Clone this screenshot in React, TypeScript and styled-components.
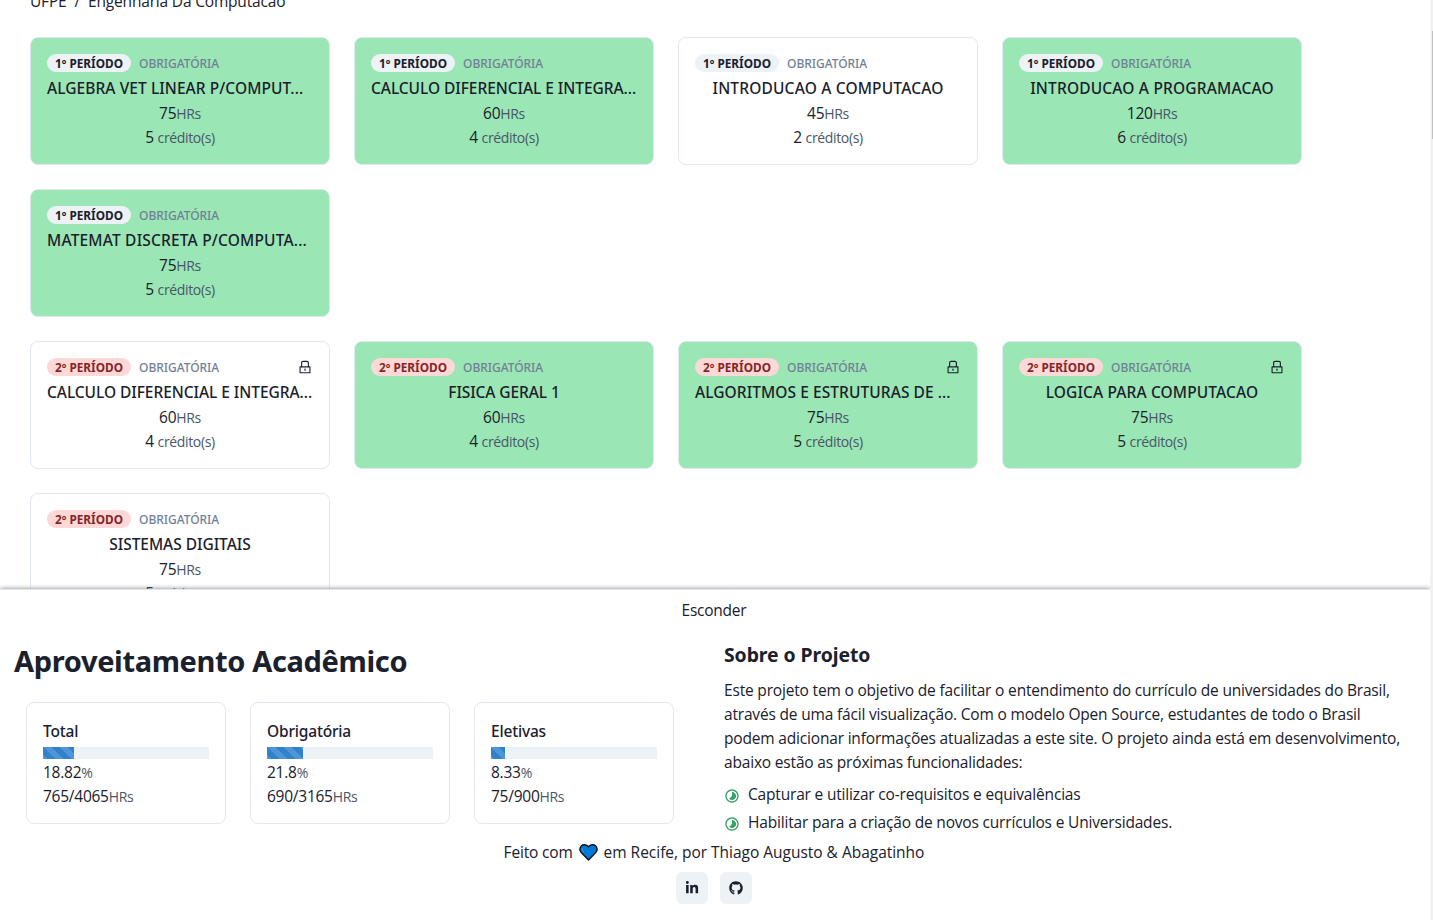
import React from "react";
import styled, { createGlobalStyle, css } from "styled-components";
import { AiOutlineLock } from "react-icons/ai";
import { MdTimelapse } from "react-icons/md";
import { FaGithub, FaLinkedinIn } from "react-icons/fa";

const body = `"Open Sans", "Noto Sans", sans-serif`;
const heading = `"Noto Sans", "Open Sans", sans-serif`;

const GlobalStyle = createGlobalStyle`
  *, *::before, *::after { box-sizing: border-box; }
  html, body { margin: 0; height: 100%; overflow: hidden; }
  body {
    background: #fff;
    color: #1a202c;
    font: 400 15.5px/24px ${body};
    letter-spacing: -0.18px;
  }
  h1, h2, h3, p, ul { margin: 0; padding: 0; }
`;

const Shell = styled.div`
  display: flex;
  width: 100%;
  height: 920px;
  overflow: hidden;
`;

const Main = styled.main`
  display: flex;
  flex-direction: column;
  flex: 1;
  min-width: 0;
  overflow: hidden;
`;

const ScrollTrack = styled.div`
  flex: none;
  display: flex;
  justify-content: flex-end;
  width: 3px;
  padding-top: 31px;
  background: #f1f1f1;
`;

const ScrollThumb = styled.div`
  width: 1px;
  height: 108px;
  background: #c1c1c1;
`;

const Curriculum = styled.section`
  flex: none;
  height: 589px;
  padding: 0 0 0 30px;
  overflow: hidden;
`;

const Breadcrumb = styled.nav`
  display: flex;
  gap: 8px;
  height: 24px;
  margin-top: -11px;
`;

const PeriodGrid = styled.div`
  display: grid;
  grid-template-columns: repeat(4, 300px);
  gap: 24px;
  margin-top: 24px;
`;

const CourseCard = styled.article<{ $done: boolean }>`
  height: 128px;
  padding: 16px;
  border: 1px solid #e2e8f0;
  border-radius: 8px;
  background: ${(p) => (p.$done ? "#9ae6b4" : "#fff")};
  text-align: center;
`;

const CardHead = styled.div`
  display: flex;
  align-items: center;
  gap: 8px;
  height: 18px;
  margin-bottom: 4px;
`;

const Badge = styled.span<{ $second: boolean }>`
  width: 84px;
  border-radius: 9px;
  font: 700 11.8px/18px ${heading};
  letter-spacing: 0;
  white-space: nowrap;
  ${(p) =>
    p.$second
      ? css`
          background: #fed7d7;
          color: #822727;
        `
      : css`
          background: #edf2f7;
          color: #1a202c;
        `}
`;

const Kind = styled.span`
  padding-top: 2px;
  color: #718096;
  font: 500 12px/18px ${heading};
  letter-spacing: -0.03px;
`;

const LockMark = styled(AiOutlineLock)`
  width: 16px;
  height: 16px;
  margin-left: auto;
`;

const CourseName = styled.h3<{ $clipped: boolean; $tracking: number }>`
  font: 500 15.5px/24px ${heading};
  letter-spacing: ${(p) => p.$tracking}px;
  text-align: ${(p) => (p.$clipped ? "left" : "center")};
  white-space: nowrap;
`;

const Figures = styled.p`
  height: 24px;
  padding-top: 1px;
  letter-spacing: -0.25px;
`;

const Unit = styled.span`
  color: #4a5568;
  font-size: 14px;
  line-height: 1;
  letter-spacing: -0.35px;
`;

const Panel = styled.footer`
  position: relative;
  flex: 1;
  display: flex;
  flex-direction: column;
  align-items: center;
  padding: 8px 2px 0 0;
  border-top: 1px solid #e2e8f0;
  background: #fff;
  box-shadow: 0 0 5px gray;
`;

const HideButton = styled.button`
  height: 24px;
  padding: 0;
  border: 0;
  background: none;
  color: inherit;
  font: inherit;
  letter-spacing: -0.25px;
`;

const Columns = styled.div`
  display: flex;
  align-self: stretch;
  height: 218px;
`;

const Progress = styled.section`
  width: 724px;
  padding: 19px 0 0 14px;
`;

const PanelTitle = styled.h1`
  font: 700 29px/40px ${heading};
  letter-spacing: -0.35px;
`;

const Stats = styled.div`
  display: flex;
  gap: 24px;
  margin: 21px 0 0 12px;
`;

const StatCard = styled.article`
  width: 200px;
  height: 122px;
  padding: 16px 16px 0;
  border: 1px solid #e2e8f0;
  border-radius: 8px;
`;

const StatName = styled.h3`
  height: 28px;
  font: 500 15.5px/24px ${heading};
  letter-spacing: -0.18px;
`;

const Track = styled.div`
  height: 12px;
  background: #edf2f7;
`;

const Fill = styled.div`
  height: 12px;
  background: linear-gradient(
      45deg,
      rgba(255, 255, 255, 0.15) 25%,
      transparent 25%,
      transparent 50%,
      rgba(255, 255, 255, 0.15) 50%,
      rgba(255, 255, 255, 0.15) 75%,
      transparent 75%,
      transparent
    )
    0 0 / 16px 16px #3182ce;
`;

const About = styled.section`
  width: 690px;
  padding-top: 21px;
`;

const AboutTitle = styled.h2`
  height: 35px;
  font: 700 19.4px/24px ${heading};
  letter-spacing: -0.07px;
`;

const RoadmapList = styled.ul`
  display: flex;
  flex-direction: column;
  gap: 4px;
  padding-top: 8px;
  list-style: none;
`;

const RoadmapItem = styled.li`
  display: flex;
  align-items: center;
  gap: 8px;
  height: 24px;
`;

const RoadmapIcon = styled(MdTimelapse)`
  width: 16px;
  height: 16px;
  margin-top: 4px;
  color: #38a169;
`;

const Credits = styled.p`
  display: flex;
  align-items: center;
  gap: 6px;
`;

const CreditNames = styled.span`
  letter-spacing: -0.02px;
`;

const Links = styled.div`
  display: flex;
  gap: 12px;
  margin-top: 8px;
`;

const LinkButton = styled.a`
  display: flex;
  align-items: center;
  justify-content: center;
  width: 32px;
  height: 32px;
  border-radius: 6px;
  background: #edf2f7;
  font-size: 14px;
`;

type Course = {
  name: string;
  hours: number;
  credits: number;
  done?: boolean;
  locked?: boolean;
  tracking?: number;
};

const periods: Course[][] = [
  [
    { name: "ALGEBRA VET LINEAR P/COMPUT...", hours: 75, credits: 5, done: true, tracking: 0.07 },
    { name: "CALCULO DIFERENCIAL E INTEGRA...", hours: 60, credits: 4, done: true, tracking: -0.05 },
    { name: "INTRODUCAO A COMPUTACAO", hours: 45, credits: 2 },
    { name: "INTRODUCAO A PROGRAMACAO", hours: 120, credits: 6, done: true },
    { name: "MATEMAT DISCRETA P/COMPUTA...", hours: 75, credits: 5, done: true, tracking: 0.18 },
  ],
  [
    { name: "CALCULO DIFERENCIAL E INTEGRA...", hours: 60, credits: 4, locked: true, tracking: -0.05 },
    { name: "FISICA GERAL 1", hours: 60, credits: 4, done: true, tracking: -0.1 },
    { name: "ALGORITMOS E ESTRUTURAS DE ...", hours: 75, credits: 5, done: true, locked: true, tracking: 0.07 },
    { name: "LOGICA PARA COMPUTACAO", hours: 75, credits: 5, done: true, locked: true, tracking: 0.12 },
    { name: "SISTEMAS DIGITAIS", hours: 75, credits: 5, tracking: -0.04 },
  ],
];

const stats = [
  { name: "Total", percent: 18.82, got: 765, total: 4065 },
  { name: "Obrigatória", percent: 21.8, got: 690, total: 3165 },
  { name: "Eletivas", percent: 8.33, got: 75, total: 900 },
];

const BlueHeart = () => (
  <svg width="19" height="18" viewBox="0 -0.5 19 18" aria-label="coração azul">
    <path
      d="M9.5 16.4 2.2 9.1C.4 7.2.5 4.1 2.3 2.4 4.3.6 7.4.8 9.5 3.3c2.1-2.5 5.2-2.7 7.2-.9 1.8 1.7 1.9 4.8.1 6.7Z"
      fill="#0078d7"
      stroke="#0b1016"
      strokeWidth="1.4"
      strokeLinejoin="round"
    />
    <path d="M3.2 5.2c.1 1.3.5 2.2 1.3 3" fill="none" stroke="#4aa3e8" strokeWidth="1" strokeLinecap="round" />
  </svg>
);

export default function App() {
  return (
    <Shell>
      <GlobalStyle />
      <Main>
        <Curriculum>
          <Breadcrumb>
            <span>UFPE</span>
            <span>/</span>
            <span>Engenharia Da Computacao</span>
          </Breadcrumb>
          {periods.map((courses, index) => (
            <PeriodGrid key={index}>
              {courses.map((course) => (
                <CourseCard key={course.name} $done={!!course.done}>
                  <CardHead>
                    <Badge $second={index === 1}>{index + 1}º PERÍODO</Badge>
                    <Kind>OBRIGATÓRIA</Kind>
                    {course.locked && <LockMark />}
                  </CardHead>
                  <CourseName $clipped={course.name.endsWith("...")} $tracking={course.tracking ?? 0.17}>
                    {course.name}
                  </CourseName>
                  <Figures>
                    {course.hours}
                    <Unit>HRs</Unit>
                  </Figures>
                  <Figures>
                    {course.credits} <Unit>crédito(s)</Unit>
                  </Figures>
                </CourseCard>
              ))}
            </PeriodGrid>
          ))}
        </Curriculum>
        <Panel>
          <HideButton>Esconder</HideButton>
          <Columns>
            <Progress>
              <PanelTitle>Aproveitamento Acadêmico</PanelTitle>
              <Stats>
                {stats.map((stat) => (
                  <StatCard key={stat.name}>
                    <StatName>{stat.name}</StatName>
                    <Track>
                      <Fill style={{ width: `${stat.percent}%` }} />
                    </Track>
                    <Figures>
                      {stat.percent}
                      <Unit>%</Unit>
                    </Figures>
                    <Figures>
                      {stat.got}/{stat.total}
                      <Unit>HRs</Unit>
                    </Figures>
                  </StatCard>
                ))}
              </Stats>
            </Progress>
            <About>
              <AboutTitle>Sobre o Projeto</AboutTitle>
              <p>
                Este projeto tem o objetivo de facilitar o entendimento do currículo de universidades do Brasil,
                através de uma fácil visualização. Com o modelo Open Source, estudantes de todo o Brasil podem
                adicionar informações atualizadas a este site. O projeto ainda está em desenvolvimento, abaixo estão
                as próximas funcionalidades:
              </p>
              <RoadmapList>
                <RoadmapItem>
                  <RoadmapIcon />
                  Capturar e utilizar co-requisitos e equivalências
                </RoadmapItem>
                <RoadmapItem>
                  <RoadmapIcon />
                  Habilitar para a criação de novos currículos e Universidades.
                </RoadmapItem>
              </RoadmapList>
            </About>
          </Columns>
          <Credits>
            Feito com
            <BlueHeart />
            <CreditNames>em Recife, por Thiago Augusto &amp; Abagatinho</CreditNames>
          </Credits>
          <Links>
            <LinkButton>
              <FaLinkedinIn />
            </LinkButton>
            <LinkButton>
              <FaGithub />
            </LinkButton>
          </Links>
        </Panel>
      </Main>
      <ScrollTrack>
        <ScrollThumb />
      </ScrollTrack>
    </Shell>
  );
}
